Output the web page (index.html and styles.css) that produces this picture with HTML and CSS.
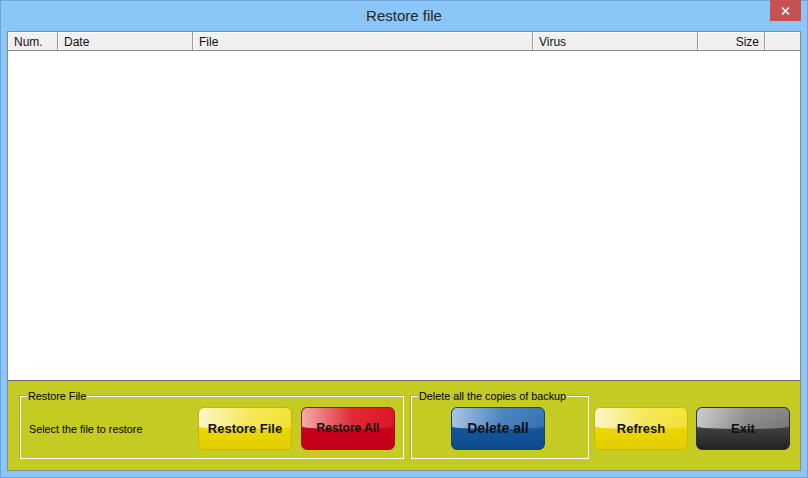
FILE: index.html
```html
<!DOCTYPE html>
<html>
<head>
<meta charset="utf-8">
<link rel="stylesheet" href="styles.css">
</head>
<body>
<div class="window">
  <div class="titlebar">
    <span class="title">Restore file</span>
    <div class="close">
      <svg width="9" height="8" viewBox="0 0 9 8"><path d="M1 0.5 L8 7.5 M8 0.5 L1 7.5" stroke="#fff" stroke-width="1.6" fill="none"/></svg>
    </div>
  </div>
  <div class="client">
    <div class="list">
      <div class="header">
        <div class="col c-num">Num.</div>
        <div class="col c-date">Date</div>
        <div class="col c-file">File</div>
        <div class="col c-virus">Virus</div>
        <div class="col c-size">Size</div>
        <div class="col c-rest"></div>
      </div>
      <div class="rows"></div>
    </div>
    <div class="panel">
      <div class="group g1">
        <span class="legend">Restore File</span>
        <span class="hint">Select the file to restore</span>
        <button class="gbtn yellow"><span>Restore File</span></button>
        <button class="gbtn red small"><span>Restore All</span></button>
      </div>
      <div class="group g2">
        <span class="legend">Delete all the copies of backup</span>
        <button class="gbtn blue big"><span>Delete all</span></button>
      </div>
      <button class="gbtn yellow solo refresh"><span>Refresh</span></button>
      <button class="gbtn gray solo"><span>Exit</span></button>
    </div>
  </div>
</div>
</body>
</html>
```

FILE: styles.css
```css
* { box-sizing: border-box; }
html, body { margin: 0; padding: 0; }
body { width: 808px; height: 478px; overflow: hidden; background: #8cc6f8; }

.window {
  width: 808px;
  height: 478px;
  background: #8cc6f8;
  border: 1px solid #6aa5dc;
  padding: 0 6px 6px 6px;
  display: flex;
  flex-direction: column;
}

.titlebar {
  position: relative;
  height: 30px;
  display: flex;
  align-items: center;
  justify-content: center;
}
.title {
  font-family: "Liberation Sans", Arial, sans-serif;
  font-size: 15px;
  color: #262626;
  margin-top: -1px;
}
.close {
  position: absolute;
  top: -1px;
  right: 0px;
  width: 31px;
  height: 21px;
  background: #c75050;
  display: flex;
  align-items: center;
  justify-content: center;
  padding-top: 1px;
}

.client {
  height: 440px;
  border: 1px solid #8a8a8a;
  display: flex;
  flex-direction: column;
  background: #fff;
}

.list {
  flex: 1;
  display: flex;
  flex-direction: column;
  border-bottom: 1px solid #6a6a6a;
}
.header {
  display: flex;
  height: 19px;
  background: #f0f0f0;
}
.col {
  height: 19px;
  border-right: 1px solid #9a9a9a;
  border-bottom: 1px solid #8a8a8a;
  box-shadow: inset 1px 1px 0 #fff;
  font-family: "Liberation Sans", Arial, sans-serif;
  font-size: 12px;
  line-height: 20px;
  color: #111;
  padding: 0 6px;
  white-space: nowrap;
}
.c-num { width: 50px; }
.c-date { width: 135px; }
.c-file { width: 340px; }
.c-virus { width: 165px; }
.c-size { width: 67px; text-align: right; padding-right: 5px; }
.c-rest { flex: 1; border-right: none; }
.rows { flex: 1; background: #fff; }

.panel {
  height: 89px;
  background: #c4cb22;
  display: flex;
  align-items: flex-start;
  padding: 15px 0 0 12px;
}

.group {
  position: relative;
  height: 63px;
  border: 1px solid #fff;
  box-shadow: -1px -1px 0 #a9ae3a;
  display: flex;
  align-items: flex-start;
  padding: 10px 8px 8px 8px;
}
.g1 { width: 384px; margin-right: 7px; }
.g2 { width: 178px; margin-right: 5px; padding-left: 39px; }
.legend {
  position: absolute;
  top: -8px;
  left: 6px;
  padding: 0 1px 0 1px;
  background: #c4cb22;
  font-family: "Liberation Sans", Arial, sans-serif;
  font-size: 10.8px;
  line-height: 14px;
  color: #000;
  white-space: nowrap;
}
.hint {
  flex: 1;
  align-self: center;
  font-family: "Liberation Sans", Arial, sans-serif;
  font-size: 10.8px;
  color: #000;
}
.g1 .red { margin-left: 9px; }

.gbtn {
  position: relative;
  width: 94px;
  height: 43px;
  border-radius: 6px;
  border: 1px solid #c9b400;
  padding: 0;
  margin: 0;
  display: flex;
  align-items: center;
  justify-content: center;
  font-family: "Liberation Sans", Arial, sans-serif;
  font-weight: bold;
  font-size: 13px;
  color: #111;
  overflow: hidden;
}
.gbtn span { position: relative; z-index: 1; margin-top: -1px; }
.gbtn::before {
  content: "";
  position: absolute;
  top: 0;
  left: 0;
  right: 0;
  height: 50%;
  border-radius: 5px 5px 60% 60% / 5px 5px 3px 3px;
  background: linear-gradient(to right, rgba(255,255,255,0.78), rgba(255,255,255,0.35) 55%, rgba(255,255,255,0.22));
}
.small { font-size: 12px; }
.big { font-size: 14px; }

.yellow { background: linear-gradient(#f3df00, #e4cd00); border-color: #cbb500; }
.red { background: linear-gradient(#d4001c, #bf0019); border-color: #98101a; }
.red::before { background: linear-gradient(to right, rgba(255,230,220,0.75), rgba(255,120,100,0.35) 55%, rgba(255,90,70,0.25)); }
.blue { background: linear-gradient(#1c63aa, #0c4a8c); border-color: #1b426c; }
.blue::before { background: linear-gradient(to right, rgba(230,240,255,0.7), rgba(170,200,240,0.35) 55%, rgba(150,190,240,0.25)); }
.gray { background: linear-gradient(#5c5c5c, #232323); border-color: #2e2e2e; }
.gray::before { background: linear-gradient(to right, rgba(255,255,255,0.7), rgba(220,220,220,0.45) 55%, rgba(200,200,200,0.4)); }

.solo { margin-top: 11px; }
.refresh { margin-right: 8px; }
```
